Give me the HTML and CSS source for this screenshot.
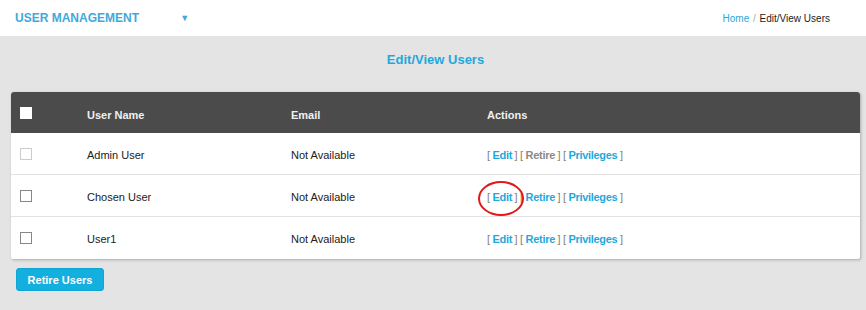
FILE: index.html
```html
<!DOCTYPE html>
<html>
	<head>
		<title>User Management</title>
		<link rel="stylesheet" href="styles.css">
	</head>
	<body>
	<div class="topbar">
		<div class="brand">USER MANAGEMENT <span class="caret">&#9660;</span></div>
		<div class="crumbs"><a href="#">Home</a> <span class="sep">/</span> Edit/View Users</div>
	</div>
	<div class="content">
		<h3 class="title">Edit/View Users</h3>
		<div class="card">
			<div class="row head">
				<div class="cell"><span class="box filled"></span></div>
				<div class="cell">User Name</div>
				<div class="cell">Email</div>
				<div class="cell">Actions</div>
			</div>
			<div class="row">
				<div class="cell"><span class="box off"></span></div>
				<div class="cell">Admin User</div>
				<div class="cell">Not Available</div>
				<div class="cell actions">[ <a href="#">Edit</a> ] [ <span class="dis">Retire</span> ] [ <a href="#">Privileges</a> ]</div>
			</div>
			<div class="row">
				<div class="cell"><span class="box"></span></div>
				<div class="cell">Chosen User</div>
				<div class="cell">Not Available</div>
				<div class="cell actions"><span class="mark">[ <a href="#">Edit</a> ]<span class="ring"></span></span> [ <a href="#">Retire</a> ] [ <a href="#">Privileges</a> ]</div>
			</div>
			<div class="row last">
				<div class="cell"><span class="box"></span></div>
				<div class="cell">User1</div>
				<div class="cell">Not Available</div>
				<div class="cell actions">[ <a href="#">Edit</a> ] [ <a href="#">Retire</a> ] [ <a href="#">Privileges</a> ]</div>
			</div>
		</div>
		<button class="submit">Retire Users</button>
	</div>
	</body>
</html>
```
FILE: styles.css
```css
body {
	margin: 0;
	font-family: "Liberation Sans", Arial, sans-serif;
	font-size: 11px;
	color: #222;
	background-color: #e4e4e4;
}
.topbar {
	height: 36px;
	background-color: #fff;
	display: flex;
	align-items: center;
	justify-content: space-between;
	padding: 0 36px 0 15px;
}
.brand {
	color: #3fa9dc;
	font-weight: bold;
	font-size: 12px;
}
.caret {
	font-size: 9px;
	margin-left: 38px;
	position: relative;
	top: -1px;
}
.crumbs {
	font-size: 10px;
	color: #222;
}
.crumbs a {
	color: #2aa7dd;
	text-decoration: none;
}
.crumbs .sep {
	color: #aaa;
	margin: 0 1px;
}
.content {
	padding: 0 6px 19px 11px;
}
.title {
	margin: 0;
	height: 56px;
	line-height: 48px;
	text-align: center;
	font-size: 13px;
	color: #1ea8dc;
}
.card {
	background-color: #fff;
	border-radius: 3px 3px 2px 2px;
	box-shadow: 1px 1px 3px rgba(0,0,0,0.25);
}
.row {
	display: grid;
	grid-template-columns: 76px 204px 196px 1fr;
	height: 42px;
	align-items: center;
	border-bottom: 1px solid #e2e2e2;
	box-sizing: border-box;
}
.row .cell {
	position: relative;
	top: 1px;
}
.row.last {
	border-bottom: 0;
}
.row.head {
	height: 41px;
	background-color: #4b4b4b;
	color: #f0f0f0;
	font-weight: bold;
	border-radius: 3px 3px 0 0;
	border-bottom: 0;
}
.row.head .cell {
	top: 2px;
}
.cell:first-child {
	padding-left: 9px;
}
.row .cell:first-child {
	top: 0;
}
.box {
	display: block;
	width: 10px;
	height: 10px;
	border: 1px solid #888;
	background-color: #fff;
}
.box.off {
	border-color: #ccc;
}
.box.filled {
	border-color: #fff;
}
.actions {
	color: #8c7e6c;
	word-spacing: -0.6px;
}
.actions a {
	color: #1ea8dc;
	text-decoration: none;
	font-weight: bold;
	letter-spacing: -0.3px;
}
.actions .dis {
	color: #8a8a8a;
	font-weight: bold;
	letter-spacing: -0.3px;
}
.mark {
	position: relative;
}
.ring {
	position: absolute;
	left: -9px;
	top: -10px;
	width: 42px;
	height: 31px;
	border: 2px solid #e01818;
	border-radius: 50%;
}
button.submit {
	margin: 9px 0 0 5px;
	height: 23px;
	width: 88px;
	background-color: #12afdf;
	color: #fff;
	font-family: "Liberation Sans", Arial, sans-serif;
	font-weight: bold;
	font-size: 11px;
	border: 1px solid #10a6d4;
	border-radius: 3px;
	padding: 0;
}
```
